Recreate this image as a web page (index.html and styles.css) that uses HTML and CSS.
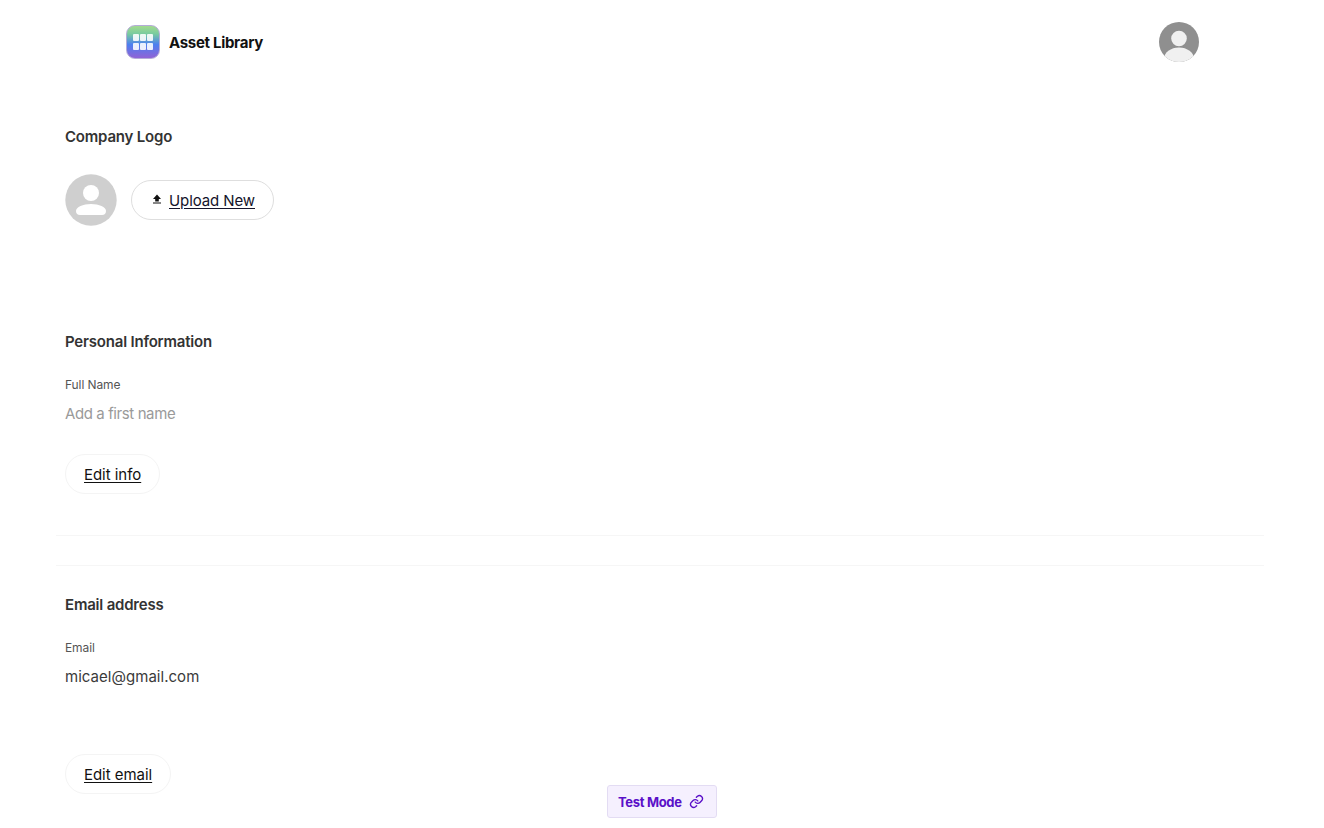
FILE: index.html
```html
<!DOCTYPE html>
<html lang="en">
<head>
  <meta charset="UTF-8" />
  <meta name="viewport" content="width=device-width, initial-scale=1.0" />
  <title>Asset Library</title>
  <link rel="stylesheet" href="styles.css">
</head>
<body>
  <header class="topbar">
    <div class="brand">
      <div class="brand-icon">
        <span></span><span></span><span></span><span></span><span></span><span></span>
      </div>
      <span class="brand-name">Asset Library</span>
    </div>
    <svg class="user-avatar" viewBox="0 0 40 40" aria-hidden="true">
      <defs>
        <clipPath id="avatarClip"><circle cx="20" cy="20" r="20" /></clipPath>
      </defs>
      <circle cx="20" cy="20" r="20" fill="#8f8f8f" />
      <g clip-path="url(#avatarClip)" fill="#f0f0f0">
        <circle cx="20" cy="16.500" r="7.800" />
        <ellipse cx="20" cy="37" rx="15" ry="11.500" />
      </g>
    </svg>
  </header>

  <main class="content">
    <section class="section logo-section">
      <h2>Company Logo</h2>
      <div class="logo-row">
        <svg class="logo-placeholder" viewBox="0 0 52 52" aria-hidden="true">
          <circle cx="26" cy="26" r="25.700" fill="#cfcfcf" />
          <circle cx="26" cy="19" r="8" fill="#fff" />
          <path d="M11 37c0-4 7-7 15-7s15 3 15 7c0 2.500-1.500 4-4 4H15c-2.500 0-4-1.500-4-4z" fill="#fff" />
        </svg>
        <a class="pill pill-upload" href="#">
          <svg class="upload-icon" viewBox="0 0 10 10" aria-hidden="true">
            <path d="M5 .5 9 5H6.800v2.400H3.200V5H1zM1 8.400h8v1.100H1z" fill="#111" />
          </svg>
          <span class="pill-text">Upload New</span>
        </a>
      </div>
    </section>

    <section class="section personal-section">
      <h2>Personal Information</h2>
      <div class="field-label">Full Name</div>
      <div class="field-value placeholder">Add a first name</div>
      <a class="pill pill-edit" href="#"><span class="pill-text">Edit info</span></a>
    </section>

    <hr class="divider divider-first">
    <hr class="divider divider-second">

    <section class="section email-section">
      <h2>Email address</h2>
      <div class="field-label">Email</div>
      <div class="field-value">micael@gmail.com</div>
      <a class="pill pill-edit pill-email" href="#"><span class="pill-text">Edit email</span></a>
    </section>
  </main>

  <div class="test-mode">
    <span>Test Mode</span>
    <svg viewBox="0 0 24 24" fill="none" stroke="#5a10c8" stroke-width="2.200" stroke-linecap="round" stroke-linejoin="round" aria-hidden="true">
      <path d="M10 13a5 5 0 0 0 7.500.5l3-3a5 5 0 0 0-7-7l-1.700 1.700" />
      <path d="M14 11a5 5 0 0 0-7.500-.5l-3 3a5 5 0 0 0 7 7l1.700-1.700" />
    </svg>
  </div>
</body>
</html>
```

FILE: styles.css
```css
* {
  box-sizing: border-box;
}

html, body {
  height: 100%;
}

body {
  margin: 0;
  background: #fff;
  color: #2b2b2b;
  font-family: 'Inter', 'Liberation Sans', sans-serif;
  overflow: hidden;
}

.topbar {
  display: flex;
  align-items: center;
  justify-content: space-between;
  height: 84px;
  padding: 0 125px 0 126px;
}

.brand {
  display: flex;
  align-items: center;
  gap: 9px;
}

.brand-icon {
  display: grid;
  grid-template-columns: repeat(3, 5.500px);
  grid-template-rows: repeat(2, 7px);
  gap: 1.500px;
  align-content: center;
  justify-content: center;
  width: 34px;
  height: 34px;
  border-radius: 9px;
  border: 1px solid #b4acd8;
  background: linear-gradient(180deg, #a3da8e 0%, #78cba0 25%, #4c7ff0 58%, #9063d6 100%);
}

.brand-icon span {
  background: rgba(255, 255, 255, 0.88);
  border-radius: 1px;
}

.brand-name {
  font-size: 15px;
  font-weight: 700;
  letter-spacing: -0.3px;
  color: #111;
}

.user-avatar {
  display: block;
  width: 40px;
  height: 40px;
}

.content {
  padding: 0 60px 0 56px;
}

.section {
  padding-left: 9px;
}

h2 {
  margin: 0;
  font-size: 15px;
  line-height: 20px;
  font-weight: 600;
  letter-spacing: -0.2px;
  color: #333;
}

.logo-section {
  padding-top: 43px;
  height: 248px;
}

.logo-row {
  display: flex;
  align-items: center;
  gap: 14px;
  margin-top: 27px;
}

.logo-placeholder {
  display: block;
  width: 52px;
  height: 52px;
}

.pill {
  display: inline-flex;
  align-items: center;
  height: 40px;
  border-radius: 20px;
  border: 1px solid #f4f4f4;
  color: #111;
  font-size: 15px;
  letter-spacing: -0.04px;
  text-decoration: none;
}

.pill-text {
  text-decoration: underline;
  text-underline-offset: 2px;
}

.pill-upload {
  gap: 7px;
  width: 143px;
  padding-left: 20px;
  border-color: #dedede;
  color: #14142b;
  letter-spacing: -0.1px;
}

.upload-icon {
  display: block;
  width: 10px;
  height: 10px;
  margin-top: -2px;
}

.pill-edit {
  width: 95px;
  padding-left: 18px;
  margin-top: 30px;
}

.pill-email {
  width: 106px;
  margin-top: 67px;
}

.field-label {
  margin-top: 25px;
  font-size: 12px;
  line-height: 16px;
  letter-spacing: -0.1px;
  color: #555;
}

.field-value {
  margin-top: 11px;
  font-size: 15px;
  line-height: 20px;
  letter-spacing: 0.03px;
  color: #3a3a3a;
}

.field-value.placeholder {
  color: #9a9a9a;
  letter-spacing: -0.4px;
}

.divider {
  height: 1px;
  margin: 0;
  border: 0;
  background: #f6f6f6;
}

.divider-first {
  margin-top: 41px;
}

.divider-second {
  margin-top: 29px;
}

.email-section {
  padding-top: 29px;
}

.test-mode {
  position: fixed;
  left: 607px;
  bottom: 10px;
  display: flex;
  align-items: center;
  gap: 7px;
  width: 110px;
  height: 33px;
  padding-left: 10px;
  background: #f5f0fe;
  border: 1px solid #e3dcf3;
  border-radius: 3px;
  color: #5a10c8;
  font-size: 13px;
  font-weight: 700;
  letter-spacing: -0.33px;
}

.test-mode svg {
  display: block;
  width: 15px;
  height: 15px;
}
```
